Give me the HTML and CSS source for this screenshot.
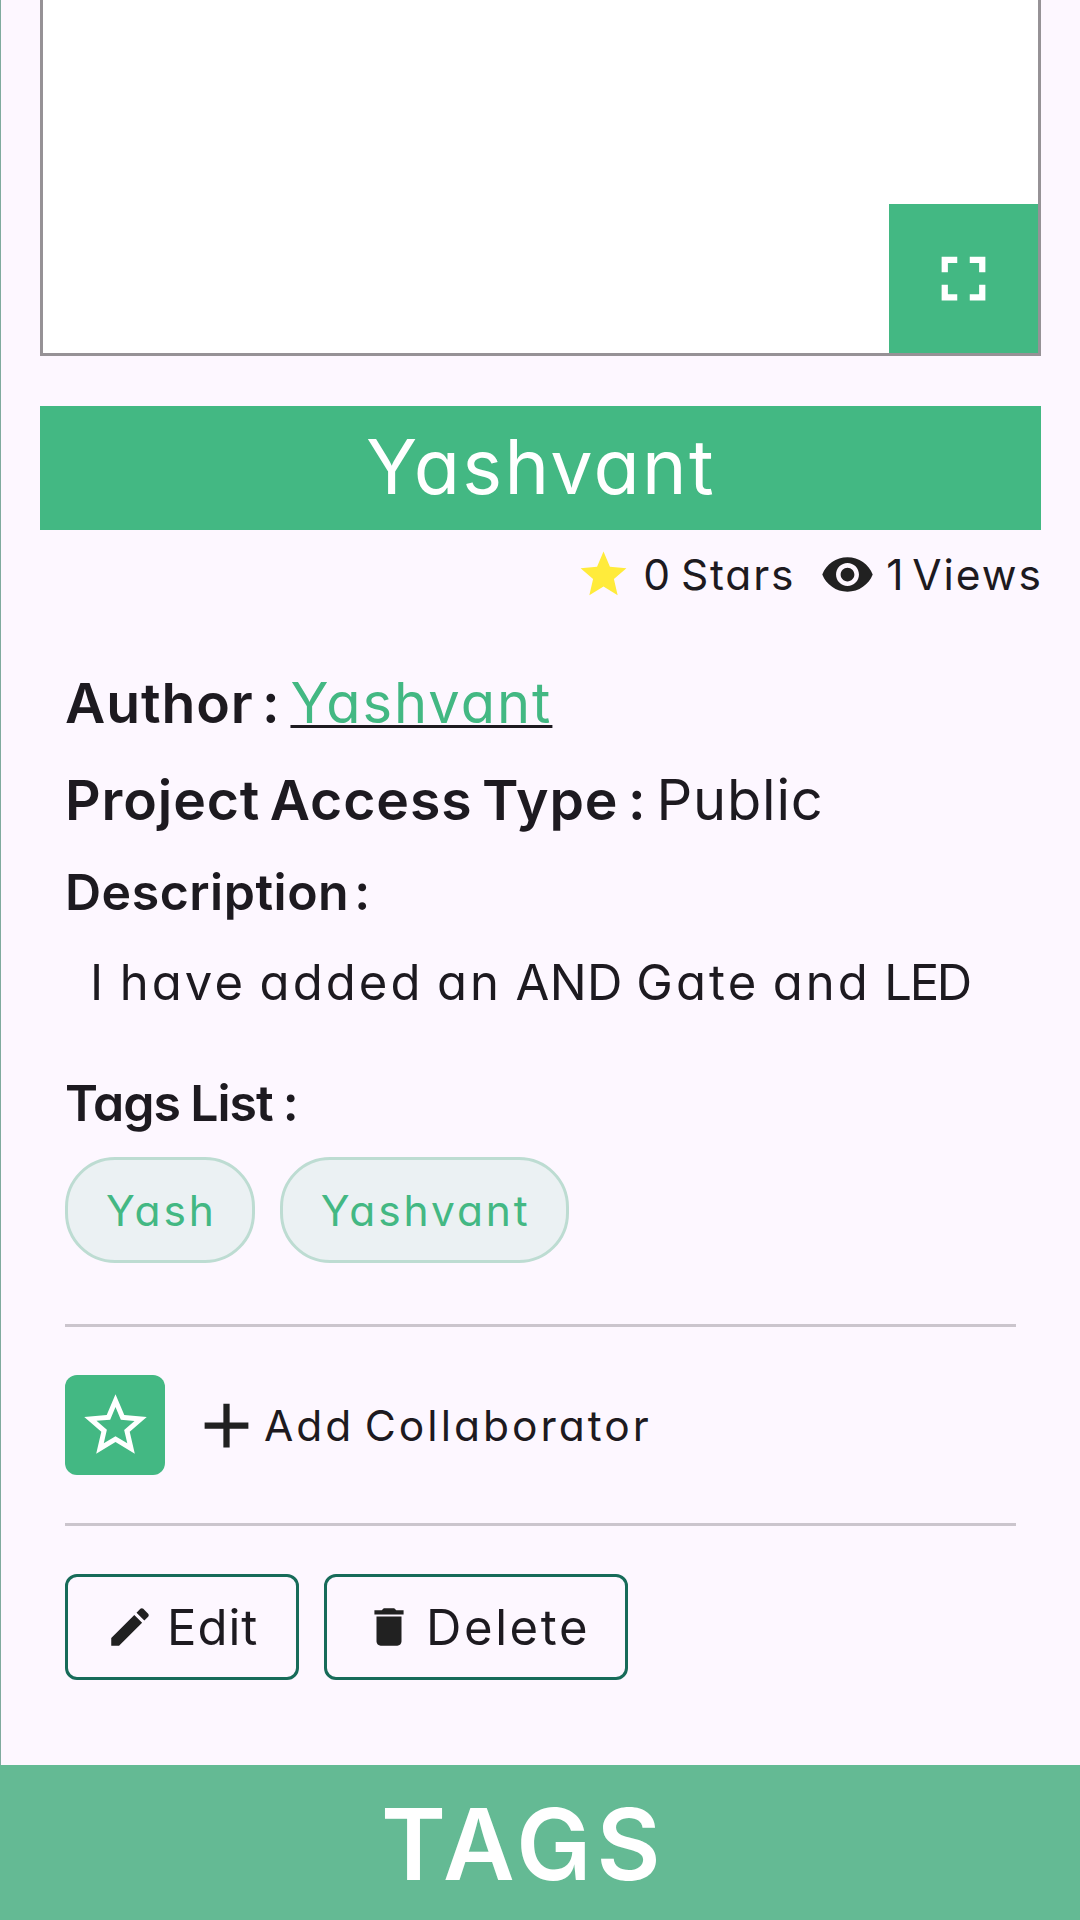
FILE: index.html
```html
<!DOCTYPE html>
<html lang="en">
<head>
<meta charset="utf-8">
<title>Project details</title>
<link rel="stylesheet" href="styles.css">
</head>
<body>
<main class="page">
  <section class="preview">
    <button class="fullscreen" aria-label="Full screen">
      <svg class="icon-lg" viewBox="0 0 24 24"><path d="M7 14H5v5h5v-2H7v-3zm-2-4h2V7h3V5H5v5zm12 7h-3v2h5v-5h-2v3zM14 5v2h3v3h2V5h-5z"/></svg>
    </button>
  </section>
  <h1 class="title">Yashvant</h1>
  <div class="stats">
    <svg class="icon-md star" viewBox="0 0 24 24"><path d="M12 17.27 18.18 21l-1.64-7.03L22 9.24l-7.19-.61L12 2 9.19 8.63 2 9.24l5.46 4.73L5.82 21z"/></svg>
    <span class="stars-count">0 Stars</span>
    <svg class="icon-md" viewBox="0 0 24 24"><path d="M12 4.5C7 4.5 2.73 7.61 1 12c1.73 4.39 6 7.5 11 7.5s9.27-3.11 11-7.5c-1.73-4.39-6-7.5-11-7.5zM12 17c-2.76 0-5-2.24-5-5s2.24-5 5-5 5 2.24 5 5-2.24 5-5 5zm0-8c-1.66 0-3 1.34-3 3s1.34 3 3 3 3-1.34 3-3-1.34-3-3-3z"/></svg>
    <span class="views-count">1 Views</span>
  </div>
  <section class="info">
    <div class="row author"><b class="label author-label">Author :</b><a class="link">Yashvant</a></div>
    <div class="row access"><b class="label access-label">Project Access Type :</b><span class="access-value">Public</span></div>
    <div class="row"><b class="label small desc-label">Description :</b></div>
    <p class="row description"><span>I have added an <span class="and">AND</span> Gate and <span class="led">LED</span></span></p>
    <div class="row tags-row"><b class="label small tags-label">Tags List :</b></div>
    <div class="chips"><span class="chip">Yash</span><span class="chip">Yashvant</span></div>
    <hr class="divider">
    <div class="collab">
      <button class="star-button" aria-label="Star">
        <svg class="icon-lg" viewBox="0 0 24 24"><path d="m22 9.24-7.19-.62L12 2 9.19 8.63 2 9.24l5.46 4.73L5.82 21 12 17.27 18.18 21l-1.63-7.03L22 9.24zM12 15.4l-3.76 2.27 1-4.28-3.32-2.88 4.38-.38L12 6.1l1.71 4.04 4.38.38-3.32 2.88 1 4.28L12 15.4z"/></svg>
      </button>
      <svg class="icon-lg plus" viewBox="0 0 24 24"><path d="M19 13h-6v6h-2v-6H5v-2h6V5h2v6h6v2z"/></svg>
      <span class="collab-text">Add Collaborator</span>
    </div>
    <hr class="divider">
    <div class="actions">
      <button class="action edit"><svg class="icon-sm" viewBox="0 0 24 24"><path d="M3 17.25V21h3.75L17.81 9.94l-3.75-3.75L3 17.25zM20.71 7.04c.39-.39.39-1.02 0-1.41l-2.34-2.34c-.39-.39-1.02-.39-1.41 0l-1.83 1.83 3.75 3.75 1.83-1.83z"/></svg><span>Edit</span></button>
      <button class="action delete"><svg class="icon-sm" viewBox="0 0 24 24"><path d="M6 19c0 1.1.9 2 2 2h8c1.1 0 2-.9 2-2V7H6v12zM19 4h-3.5l-1-1h-5l-1 1H5v2h14V4z"/></svg><span>Delete</span></button>
    </div>
  </section>
</main>
<footer class="footer">TAGS</footer>
</body>
</html>
```
FILE: styles.css
```css
* { box-sizing: border-box; }

body {
  margin: 0;
  width: 1080px;
  height: 1920px;
  display: flex;
  flex-direction: column;
  overflow: hidden;
  background: #fdf7ff;
  color: #1d1a20;
  font-family: Inter, "Open Sans", sans-serif;
  font-feature-settings: "cv11" 1;
  white-space: nowrap;
}

svg { display: block; flex: none; fill: #212121; }

button {
  padding: 0;
  border: 0;
  background: none;
  color: inherit;
  font: inherit;
  font-feature-settings: inherit;
  letter-spacing: inherit;
}

.icon-lg { width: 75px; height: 75px; }
.icon-md { width: 55px; height: 55px; }
.icon-sm { width: 50px; height: 50px; }

.page {
  height: 1765px;
  padding: 0 39px;
  border-left: 1px solid #7fab9e;
}

.preview {
  height: 356px;
  width: 1001px;
  display: flex;
  align-items: flex-end;
  justify-content: flex-end;
  border: 3px solid #969296;
  border-top: 0;
  background: #fff;
}

.fullscreen {
  width: 149px;
  height: 149px;
  display: grid;
  place-items: center;
  background: #43b883;
}
.fullscreen svg, .star-button svg { fill: #fff; }

.title {
  width: 1001px;
  height: 124px;
  margin: 50px 0 0;
  padding: 0 0 4px 1px;
  display: flex;
  align-items: center;
  justify-content: center;
  background: #43b883;
  color: #fff;
  font-size: 75.5px;
  font-weight: 400;
  letter-spacing: 2.3px;
}

.stats {
  width: 1001px;
  height: 55px;
  margin-top: 17px;
  display: flex;
  align-items: center;
  justify-content: flex-end;
  font-size: 42.5px;
}
.stats .star { fill: #ffeb3b; }
.stars-count { margin: 0 25px 0 12px; letter-spacing: 1.8px; word-spacing: -4.5px; }
.views-count { margin: 0 -2px 0 11px; letter-spacing: 2px; word-spacing: -7.3px; }

.info { padding: 71px 25px 0; }

.row {
  display: flex;
  height: 60px;
  line-height: 60px;
  margin: 0 0 31px;
  font-size: 56px;
}
.label { font-size: 55.3px; font-weight: 600; }
.label.small { font-size: 50px; }

.author { margin-bottom: 37px; }
.author-label { letter-spacing: 0.9px; word-spacing: -6.5px; }
.link {
  margin-left: 10px;
  color: #43b883;
  letter-spacing: 2px;
  text-decoration: underline 3px #1d1a20;
  text-underline-offset: 2px;
  text-decoration-skip-ink: none;
}

.access { margin-bottom: 32px; }
.access-label { letter-spacing: 0.9px; word-spacing: -5.3px; }
.access-value { margin-left: 10px; letter-spacing: 0.8px; }

.desc-label { letter-spacing: 0.5px; word-spacing: -8px; }
.description {
  margin-bottom: 60px;
  padding-left: 25px;
  font-size: 49px;
  letter-spacing: 3.1px;
  word-spacing: -3.5px;
}
.and { letter-spacing: 0.4px; }
.led { letter-spacing: -2.4px; }

.tags-row { margin-bottom: 24px; }
.tags-label { letter-spacing: -1px; word-spacing: -1.5px; }

.chips { display: flex; gap: 25px; margin-bottom: 61px; }
.chip {
  height: 106px;
  display: flex;
  align-items: center;
  padding: 0 35px 0 38px;
  border: 3px solid #bddcd2;
  border-radius: 50px;
  background: #ebf1f3;
  color: #43b883;
  font-size: 42.5px;
  letter-spacing: 2.9px;
}

.divider {
  width: 951px;
  height: 3px;
  margin: 0 0 48px;
  border: 0;
  background: #cbc5cd;
}

.collab {
  display: flex;
  align-items: center;
  margin-bottom: 48px;
  font-size: 42.5px;
  letter-spacing: 3px;
  word-spacing: -4.5px;
}
.star-button {
  width: 100px;
  height: 100px;
  display: grid;
  place-items: center;
  border-radius: 12px;
  background: #43b883;
}
.plus { margin-left: 24px; }

.actions { display: flex; gap: 25px; font-size: 49px; }
.action {
  height: 106px;
  display: flex;
  align-items: center;
  gap: 12px;
  padding-left: 37px;
  border: 3px solid #176b59;
  border-radius: 12px;
}
.edit { width: 234px; letter-spacing: 1px; }
.delete { width: 304px; letter-spacing: 2.6px; }

.footer {
  height: 155px;
  padding: 4px 33px 0 0;
  display: flex;
  align-items: center;
  justify-content: center;
  background: #64ba94;
  color: #fff;
  font-size: 98.5px;
  font-weight: 600;
  font-feature-settings: "cv10" 1;
  letter-spacing: 5.5px;
}
```
